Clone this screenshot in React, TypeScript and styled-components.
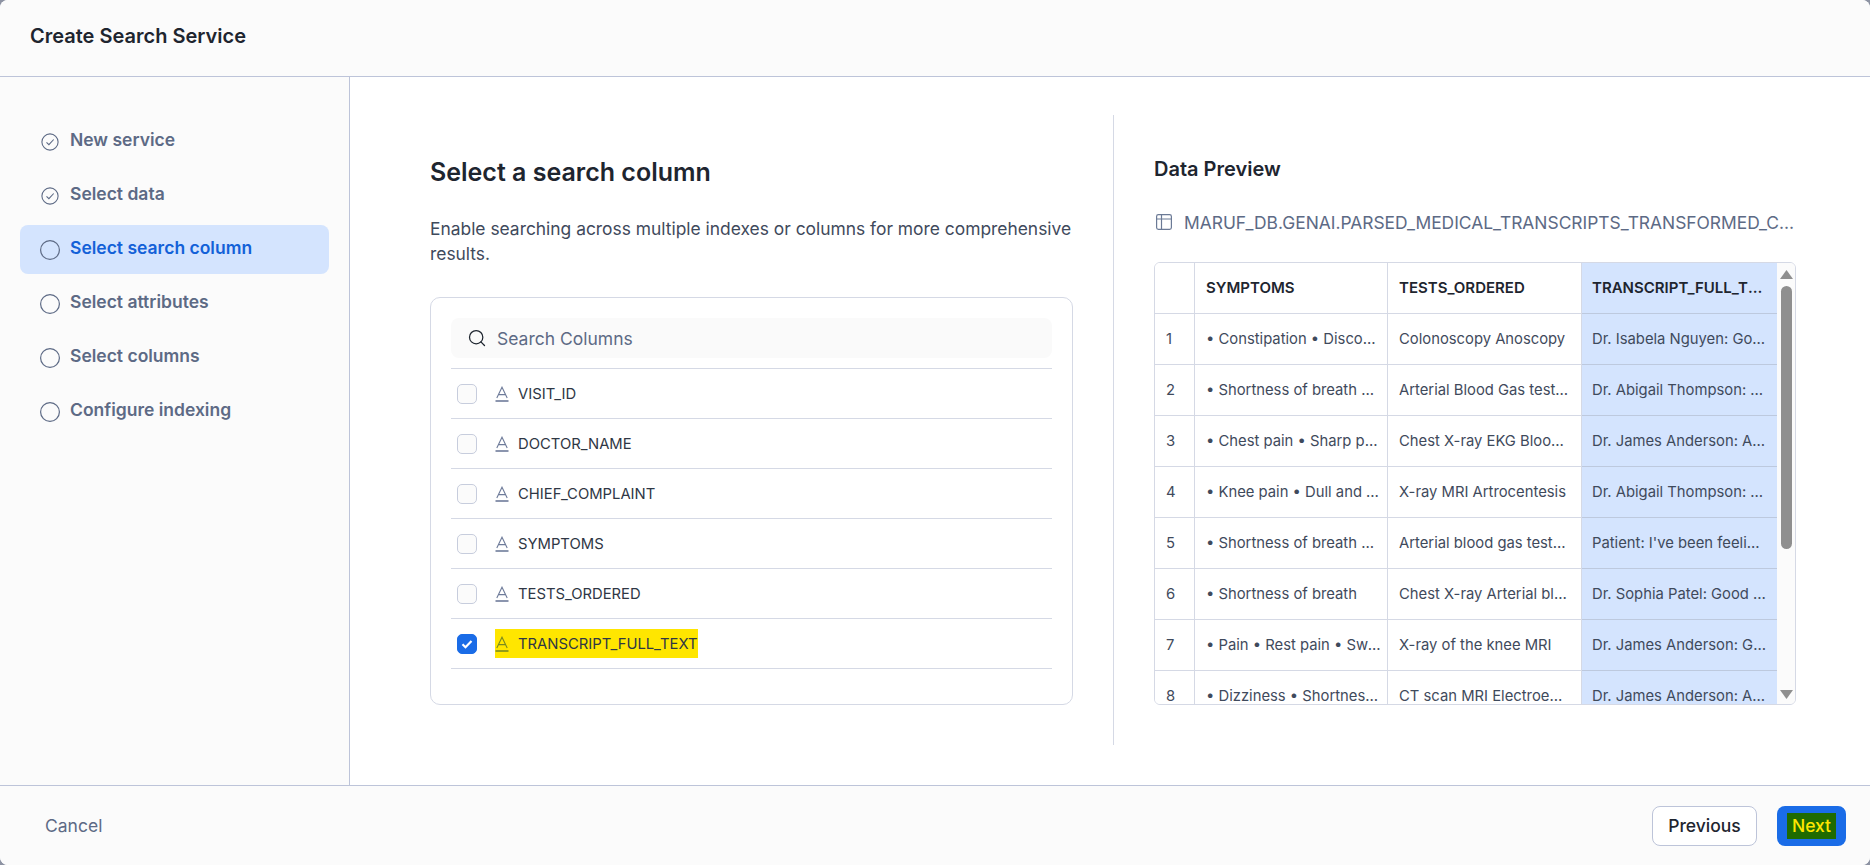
import React from "react";
import styled, { createGlobalStyle } from "styled-components";
import { Search } from "lucide-react";

const GlobalStyle = createGlobalStyle`
  html, body {
    margin: 0;
    padding: 0;
    background: #8d93a3;
  }
  * {
    box-sizing: border-box;
  }
`;

const Modal = styled.div`
  width: 1870px;
  height: 865px;
  display: flex;
  flex-direction: column;
  overflow: hidden;
  border-radius: 8px;
  background: #fff;
  font-family: Inter, "Liberation Sans", sans-serif;
  color: #1e252f;
`;

const Header = styled.header`
  height: 77px;
  flex: none;
  padding: 0 30px 5px;
  display: flex;
  align-items: center;
  background: #fbfbfb;
  border-bottom: 1px solid #bdc4d9;
  font-size: 20px;
  font-weight: 600;
  color: #1e252f;
`;

const Body = styled.div`
  flex: 1;
  min-height: 0;
  display: flex;
`;

const Sidebar = styled.nav`
  width: 350px;
  flex: none;
  padding: 40px 20px 0;
  background: #fbfbfb;
  border-right: 1px solid #bdc4d9;
  display: flex;
  flex-direction: column;
  gap: 5px;
`;

const Step = styled.div<{ $active?: boolean }>`
  width: 309px;
  height: 49px;
  padding: 0 0 4px 20px;
  display: flex;
  align-items: center;
  gap: 10px;
  border-radius: 8px;
  font-size: 17.5px;
  font-weight: 600;
  background: ${({ $active }) => ($active ? "#d4e4fe" : "transparent")};
  color: ${({ $active }) => ($active ? "#1361d8" : "#5d6a85")};
  svg {
    flex: none;
    position: relative;
    top: 2px;
  }
`;

const Main = styled.main`
  flex: 1;
  min-width: 0;
  padding: 38px 74px 40px 80px;
  display: flex;
`;

const LeftPane = styled.section`
  width: 684px;
  flex: none;
  padding: 41px 40px 0 0;
  border-right: 1px solid #d5d9e5;
`;

const Title = styled.h2`
  margin: 0 0 28px;
  font-size: 25px;
  line-height: 32px;
  font-weight: 600;
  color: #1e252f;
`;

const Description = styled.p`
  margin: 0 0 31px;
  font-size: 17.4px;
  line-height: 25px;
  color: #3f4a5c;
`;

const ColumnCard = styled.div`
  width: 643px;
  height: 408px;
  padding: 20px;
  border: 1px solid #d5d9e5;
  border-radius: 10px;
`;

const SearchBox = styled.div`
  height: 40px;
  margin-bottom: 10px;
  padding: 0 16px;
  display: flex;
  align-items: center;
  gap: 10px;
  background: #fafafa;
  border-radius: 8px;
  font-size: 17.5px;
  color: #5d6a85;
  svg {
    color: #1e252f;
  }
`;

const ColumnList = styled.div`
  border-top: 1px solid #d5d9e5;
`;

const ColumnRow = styled.div`
  height: 50px;
  padding-left: 6px;
  display: flex;
  align-items: center;
  border-bottom: 1px solid #d5d9e5;
`;

const Checkbox = styled.span<{ $checked?: boolean }>`
  width: 20px;
  height: 20px;
  flex: none;
  margin-right: 18px;
  display: flex;
  align-items: center;
  justify-content: center;
  border-radius: 5px;
  border: 1px solid ${({ $checked }) => ($checked ? "#1a6ce7" : "#c7cddd")};
  background: ${({ $checked }) => ($checked ? "#1a6ce7" : "#fbfbfb")};
`;

const ColumnLabel = styled.span<{ $marked?: boolean }>`
  height: 29px;
  display: flex;
  align-items: center;
  gap: 9px;
  font-size: 14.8px;
  color: #2f3745;
  background: ${({ $marked }) => ($marked ? "#ffe600" : "transparent")};
`;

const PreviewPane = styled.section`
  flex: 1;
  min-width: 0;
  padding: 40px 0 0 40px;
`;

const PreviewTitle = styled.h3`
  margin: 0 0 26px;
  font-size: 20px;
  line-height: 28px;
  font-weight: 600;
  color: #1e252f;
`;

const TablePath = styled.div`
  height: 26px;
  margin-bottom: 27px;
  padding-left: 1px;
  display: flex;
  align-items: center;
  gap: 11px;
  font-size: 17.4px;
  color: #5d6a85;
  white-space: nowrap;
  svg {
    flex: none;
  }
`;

const PathText = styled.span`
  overflow: hidden;
  text-overflow: ellipsis;
`;

const TableFrame = styled.div`
  width: 642px;
  height: 443px;
  display: flex;
  border: 1px solid #d5d9e5;
  border-radius: 6px;
  overflow: hidden;
`;

const DataGrid = styled.div`
  width: 622px;
  flex: none;
  display: grid;
  grid-template-columns: 40px 193px 194px 195px;
  grid-auto-rows: 51px;
  overflow: hidden;
  font-size: 14.8px;
`;

const Cell = styled.div<{ $head?: boolean; $selected?: boolean; $endGap?: number }>`
  padding: 0 ${({ $endGap = 11 }) => $endGap}px 0 ${({ $selected }) => ($selected ? 10 : 11)}px;
  min-width: 0;
  line-height: ${({ $head }) => ($head ? 49 : 50)}px;
  white-space: nowrap;
  overflow: hidden;
  text-overflow: ellipsis;
  border-right: 1px solid #d5d9e5;
  border-bottom: 1px solid ${({ $selected }) => ($selected ? "#bdc9de" : "#d5d9e5")};
  font-size: ${({ $head }) => ($head ? "15px" : "inherit")};
  font-weight: ${({ $head }) => ($head ? 600 : 400)};
  color: ${({ $head }) => ($head ? "#1e252f" : "#3f4a5c")};
  background: ${({ $selected }) => ($selected ? "#d4e4fe" : "#fff")};
  &:nth-child(4n) {
    border-right: none;
  }
`;

const ScrollTrack = styled.div`
  flex: 1;
  padding: 7px 0 5px;
  display: flex;
  flex-direction: column;
  align-items: center;
  background: #fbfbfb;
`;

const ScrollThumb = styled.div`
  width: 11px;
  height: 263px;
  margin-top: 7px;
  margin-bottom: auto;
  background: #8f8f8f;
  border-radius: 6px;
`;

const Footer = styled.footer`
  height: 80px;
  flex: none;
  padding: 0 24px 0 45px;
  display: flex;
  align-items: center;
  justify-content: space-between;
  background: #fbfbfb;
  border-top: 1px solid #bdc4d9;
`;

const CancelLink = styled.span`
  font-size: 17.5px;
  color: #5d6a85;
`;

const FooterActions = styled.div`
  display: flex;
  gap: 20px;
`;

const PreviousButton = styled.button`
  width: 105px;
  height: 40px;
  padding: 0;
  background: #fff;
  border: 1px solid #bdc4d9;
  border-radius: 8px;
  font: 500 17.5px Inter, "Liberation Sans", sans-serif;
  color: #1e252f;
`;

const NextButton = styled.button`
  width: 69px;
  height: 40px;
  padding: 0;
  display: flex;
  align-items: center;
  justify-content: center;
  background: #1a6ce7;
  border: none;
  border-radius: 8px;
  font: 500 17.5px Inter, "Liberation Sans", sans-serif;
`;

const NextMark = styled.span`
  padding: 2px 5px;
  line-height: 22px;
  background: #1f6b00;
  color: #ffe600;
`;

const StepDone = () => (
  <svg width="20" height="20" viewBox="0 0 20 20" fill="none" stroke="#5d6a85">
    <circle cx="10" cy="10" r="8.1" strokeWidth="1.1" />
    <path d="M6.5 10.4l2.4 2.3 4.8-5.2" strokeWidth="1.1" />
  </svg>
);

const StepOpen = () => (
  <svg width="20" height="20" viewBox="0 0 20 20" fill="none" stroke="#5d6a85">
    <circle cx="10" cy="10" r="9.4" strokeWidth="1.2" />
  </svg>
);

const TextTypeIcon = ({ color = "#6e7b9a" }: { color?: string }) => (
  <svg width="14" height="16" viewBox="0 0 14 16" fill="none" stroke={color} strokeWidth="1.1">
    <path d="M1.8 12L7 1.2 12.2 12M3.6 8.6h6.8" />
    <path d="M0.5 15h13" strokeWidth="1.6" />
  </svg>
);

const TableIcon = () => (
  <svg width="18" height="18" viewBox="0 0 18 18" fill="none" stroke="#6b7a96" strokeWidth="1.2">
    <rect x="1.6" y="1.6" width="14.8" height="14.8" rx="1.8" />
    <path d="M1.6 6h14.8M6.5 1.6v14.8" />
  </svg>
);

const steps = [
  { label: "New service", done: true },
  { label: "Select data", done: true },
  { label: "Select search column", active: true },
  { label: "Select attributes" },
  { label: "Select columns" },
  { label: "Configure indexing" },
];

const columns = ["VISIT_ID", "DOCTOR_NAME", "CHIEF_COMPLAINT", "SYMPTOMS", "TESTS_ORDERED"];

const rows = [
  ["• Constipation • Discomfort when", "Colonoscopy Anoscopy", "Dr. Isabela Nguyen: Good morning"],
  ["• Shortness of breath • Wheezing", "Arterial Blood Gas test and more", "Dr. Abigail Thompson: Good morning"],
  ["• Chest pain • Sharp pain on", "Chest X-ray EKG Blood tests", "Dr. James Anderson: Alright then"],
  ["• Knee pain • Dull and aching", "X-ray MRI Artrocentesis", "Dr. Abigail Thompson: Good morning"],
  ["• Shortness of breath • Wheezing", "Arterial blood gas test and more", "Patient: I've been feeling unwell"],
  ["• Shortness of breath", "Chest X-ray Arterial blood gas", "Dr. Sophia Patel: Good morning to"],
  ["• Pain • Rest pain • Swelling and", "X-ray of the knee MRI", "Dr. James Anderson: Good morning"],
  ["• Dizziness • Shortness of breath", "CT scan MRI Electroencephalogram", "Dr. James Anderson: Alright then"],
];

export default function App() {
  return (
    <>
      <GlobalStyle />
      <Modal>
        <Header>Create Search Service</Header>
        <Body>
          <Sidebar>
            {steps.map((step) => (
              <Step key={step.label} $active={step.active}>
                {step.done ? <StepDone /> : <StepOpen />}
                {step.label}
              </Step>
            ))}
          </Sidebar>
          <Main>
            <LeftPane>
              <Title>Select a search column</Title>
              <Description>
                Enable searching across multiple indexes or columns for more comprehensive results.
              </Description>
              <ColumnCard>
                <SearchBox>
                  <Search size={20} strokeWidth={1.5} />
                  Search Columns
                </SearchBox>
                <ColumnList>
                  {columns.map((name) => (
                    <ColumnRow key={name}>
                      <Checkbox />
                      <ColumnLabel>
                        <TextTypeIcon />
                        {name}
                      </ColumnLabel>
                    </ColumnRow>
                  ))}
                  <ColumnRow>
                    <Checkbox $checked>
                      <svg width="14" height="14" viewBox="0 0 14 14" fill="none" stroke="#fff" strokeWidth="2.2">
                        <path d="M2.5 7.3l3 3 6-6.3" />
                      </svg>
                    </Checkbox>
                    <ColumnLabel $marked>
                      <TextTypeIcon color="#7a8a20" />
                      TRANSCRIPT_FULL_TEXT
                    </ColumnLabel>
                  </ColumnRow>
                </ColumnList>
              </ColumnCard>
            </LeftPane>
            <PreviewPane>
              <PreviewTitle>Data Preview</PreviewTitle>
              <TablePath>
                <TableIcon />
                <PathText>MARUF_DB.GENAI.PARSED_MEDICAL_TRANSCRIPTS_TRANSFORMED_CHUNKS</PathText>
              </TablePath>
              <TableFrame>
                <DataGrid>
                  <Cell $head />
                  <Cell $head>SYMPTOMS</Cell>
                  <Cell $head>TESTS_ORDERED</Cell>
                  <Cell $head $selected>
                    TRANSCRIPT_FULL_TEXT
                  </Cell>
                  {rows.map((row, i) => (
                    <React.Fragment key={i}>
                      <Cell>{i + 1}</Cell>
                      <Cell $endGap={6}>{row[0]}</Cell>
                      <Cell $endGap={12}>{row[1]}</Cell>
                      <Cell $selected>{row[2]}</Cell>
                    </React.Fragment>
                  ))}
                </DataGrid>
                <ScrollTrack>
                  <svg width="13" height="9" viewBox="0 0 13 9">
                    <path d="M6.5 0L13 9H0z" fill="#8f8f8f" />
                  </svg>
                  <ScrollThumb />
                  <svg width="13" height="9" viewBox="0 0 13 9">
                    <path d="M6.5 9L13 0H0z" fill="#8f8f8f" />
                  </svg>
                </ScrollTrack>
              </TableFrame>
            </PreviewPane>
          </Main>
        </Body>
        <Footer>
          <CancelLink>Cancel</CancelLink>
          <FooterActions>
            <PreviousButton>Previous</PreviousButton>
            <NextButton>
              <NextMark>Next</NextMark>
            </NextButton>
          </FooterActions>
        </Footer>
      </Modal>
    </>
  );
}
